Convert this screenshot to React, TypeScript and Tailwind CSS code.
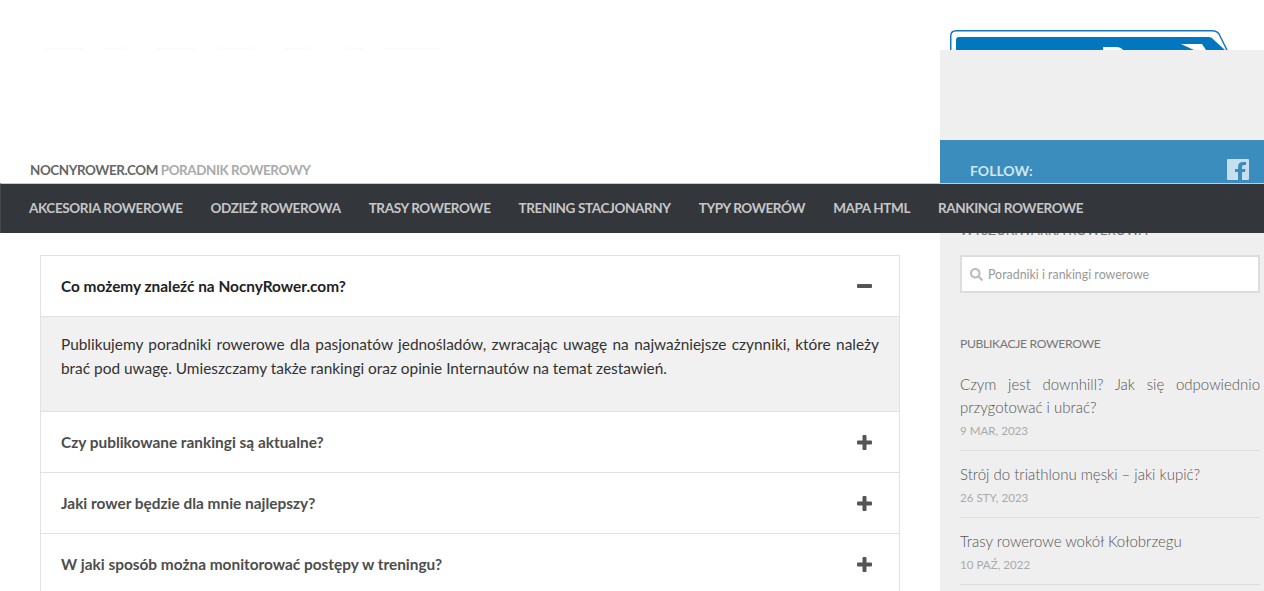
import { FaSearch } from "react-icons/fa";

const navItems = ["AKCESORIA ROWEROWE", "ODZIEŻ ROWEROWA", "TRASY ROWEROWE", "TRENING STACJONARNY", "TYPY ROWERÓW", "MAPA HTML", "RANKINGI ROWEROWE"];
const questions = ["Czy publikowane rankingi są aktualne?", "Jaki rower będzie dla mnie najlepszy?", "W jaki sposób można monitorować postępy w treningu?"];
const posts = [
  { title: "Czym jest downhill? Jak się odpowiednio przygotować i ubrać?", date: "9 MAR, 2023" },
  { title: "Strój do triathlonu męski – jaki kupić?", date: "26 STY, 2023" },
  { title: "Trasy rowerowe wokół Kołobrzegu", date: "10 PAŹ, 2022" },
];

function Logo() {
  return (
    <svg width="290" height="20" viewBox="0 0 290 20" className="block">
      <path d="M0.75 20 V6 Q0.75 0.75 6 0.75 H262 Q267 0.75 269 4 L277 20" fill="none" stroke="#1478b8" strokeWidth="1.5" />
      <path d="M6 20 V10 Q6 7 9 7 H259 Q262 7 264 10 L275 20 Z" fill="#0277c0" />
      <path d="M153 20 V17 H166 Q171 17 173 20 Z" fill="#fff" />
      <path d="M231 14 H252 L256 20 H244 Z" fill="#fff" />
    </svg>
  );
}

function Plus() {
  return (
    <svg width="15" height="15" viewBox="0 0 15 15" className="block">
      <rect x="0" y="5.5" width="15" height="4" rx="1" fill="#555" />
      <rect x="5.5" y="0" width="4" height="15" rx="1" fill="#555" />
    </svg>
  );
}

function Minus() {
  return (
    <svg width="15" height="4" viewBox="0 0 15 4" className="block">
      <rect x="0" y="0" width="15" height="4" rx="1" fill="#555" />
    </svg>
  );
}

function FacebookIcon() {
  return (
    <svg width="22" height="21" viewBox="0 0 22 21" className="block">
      <path
        fillRule="evenodd"
        d="M1 0H21Q22 0 22 1V20Q22 21 21 21H15V13H18L18.5 10H15V8Q15 6 17 6H19V3H16Q11 3 11 8V10H8V13H11V21H1Q0 21 0 20V1Q0 0 1 0Z"
        fill="#c6deed"
      />
    </svg>
  );
}

export default function App() {
  return (
    <div className="relative flex h-[591px] w-full overflow-hidden bg-white font-['Lato','Liberation_Sans',sans-serif]">
      <nav className="absolute inset-x-0 top-[183px] z-10 flex h-[50px] items-center gap-[28px] border-t border-l border-t-[#c9cacb] border-l-[#44474c] bg-[#33363b] pl-[28px] text-[13.5px] font-bold tracking-[-0.38px] whitespace-nowrap text-[#c6c7c9]">
        {navItems.map((item) => (
          <span key={item}>{item}</span>
        ))}
      </nav>

      <div className="w-[940px] shrink-0">
        <header className="flex h-[183px] flex-col justify-between pt-[47px] pl-[30px]">
          <svg width="410" height="3" viewBox="0 0 410 3" className="block">
            <path d="M15 1.5h40M73 1.5h24M125 1.5h40M188 1.5h37M253 1.5h27M315 1.5h20M353 1.5h57" stroke="#fbfbfb" strokeWidth="2" />
          </svg>
          <p className="pb-[3px] text-[13.4px] leading-[20px] font-bold tracking-[-0.4px] text-[#666]">
            NOCNYROWER.COM <span className="text-[#aaa]">PORADNIK ROWEROWY</span>
          </p>
        </header>

        <main className="mt-[72px] ml-[40px] w-[860px] border border-[#e2e2e2] text-[15.4px]">
          <div className="flex h-[61px] items-center justify-between border-b border-[#e2e2e2] pr-[27px] pl-[20px] font-bold text-[#222]">
            <span className="pt-[1px]">Co możemy znaleźć na NocnyRower.com?</span>
            <Minus />
          </div>
          <div className="h-[95px] border-b border-[#e2e2e2] bg-[#f1f1f1] px-[20px] pt-[15px] text-justify leading-[24px] text-[#333]">
            Publikujemy poradniki rowerowe dla pasjonatów jednośladów, zwracając uwagę na najważniejsze czynniki, które należy brać pod uwagę. Umieszczamy także rankingi oraz opinie Internautów na temat zestawień.
          </div>
          {questions.map((q) => (
            <div key={q} className="flex h-[61px] items-center justify-between border-b border-[#e2e2e2] pr-[27px] pl-[20px] font-bold text-[#4d4d4d]">
              <span className="pt-[1px]">{q}</span>
              <Plus />
            </div>
          ))}
        </main>
      </div>

      <div className="w-[324px] shrink-0">
        <div className="h-[50px] overflow-hidden pt-[30px] pl-[10px]">
          <Logo />
        </div>
        <aside className="h-[541px] bg-[#efefef]">
          <div className="h-[90px]" />
          <div className="flex h-[60px] items-start justify-between bg-[#3b8dbd] pt-[19px] pr-[15px] pl-[30px]">
            <span className="mt-[1px] text-[14px] leading-[22px] font-bold text-[#d3e6f2]">FOLLOW:</span>
            <FacebookIcon />
          </div>
          <div className="pr-[4px] pl-[20px]">
            <h3 className="mt-[21px] text-[13px] leading-[18px] text-[#777]">WYSZUKIWARKA ROWEROWA</h3>
            <div className="mt-[16px] flex h-[38px] items-center gap-[5px] border-2 border-[#dddddd] bg-white pl-[8px]">
              <FaSearch size={13} color="#bbb" />
              <span className="pt-[2px] text-[12.4px] text-[#999]">Poradniki i rankingi rowerowe</span>
            </div>
            <h3 className="mt-[42px] text-[12.2px] leading-[18px] tracking-[-0.35px] text-[#777]">PUBLIKACJE ROWEROWE</h3>
            <ul className="mt-[8px]">
              {posts.map((p) => (
                <li key={p.date} className="border-b border-[#dddddd] pt-[12px] pb-[11px]">
                  <p className="text-justify text-[15px] leading-[23px] font-light text-[#555]">{p.title}</p>
                  <p className="mt-[4px] text-[11.6px] leading-[16px] text-[#aaa]">{p.date}</p>
                </li>
              ))}
            </ul>
          </div>
        </aside>
      </div>
    </div>
  );
}
